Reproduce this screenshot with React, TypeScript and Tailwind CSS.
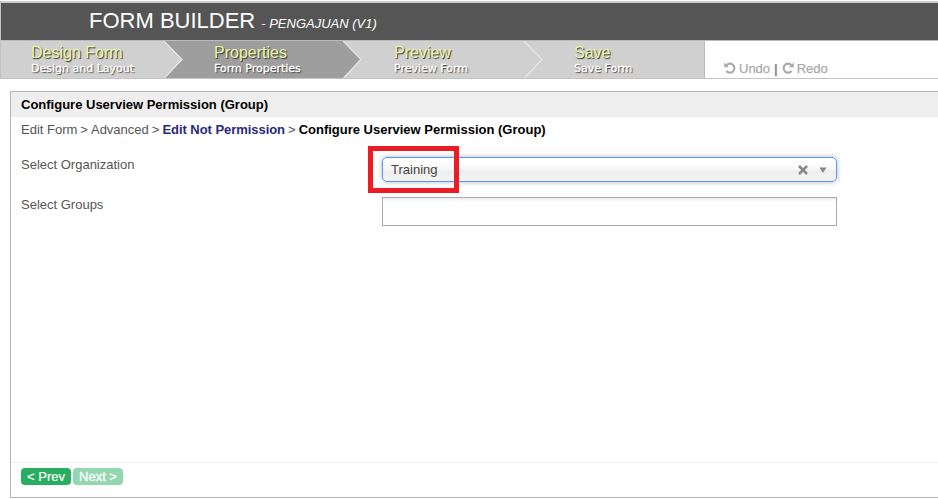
import React from "react";

type StepProps = {
  title: string;
  sub: string;
  box: string;
};

function Step({ title, sub, box }: StepProps) {
  return (
    <div className={`h-full shrink-0 pt-[3px] whitespace-nowrap ${box}`}>
      <div className="text-[16px] leading-[18px] text-[#e9f8aa] [text-shadow:1px_1px_1px_#333]">{title}</div>
      <div className="font-['DejaVu_Sans',sans-serif] text-[11px] leading-[14px] text-white [-webkit-text-stroke:0.3px_#fff] [text-shadow:1px_1px_1px_#333]">
        {sub}
      </div>
    </div>
  );
}

function Chevron({ left, right }: { left: string; right: string }) {
  return (
    <svg className="h-[37px] w-[20px] shrink-0" viewBox="0 0 20 37">
      <rect width="20" height="37" fill={right} />
      <path d="M0 0 L18.5 18.5 L0 37Z" fill={left} />
      <path d="M0 0 L18 18.5 L0.5 37" fill="none" stroke="#e8e8e8" strokeWidth="1.2" />
    </svg>
  );
}

function TurnArrow({ flip }: { flip?: boolean }) {
  return (
    <svg className={`h-[12px] w-[12px] ${flip ? "-scale-x-100" : ""}`} viewBox="0 0 12 12">
      <path d="M2.3 3.4 A4.5 4.5 0 1 1 2.4 9" fill="none" stroke="#aaaaaa" strokeWidth="2.1" />
      <path d="M0.2 0.4 V5.2 H5Z" fill="#aaaaaa" />
    </svg>
  );
}

function Separator() {
  return <span className="[word-spacing:-0.6px]"> &gt; </span>;
}

export default function App() {
  return (
    <div className="flex h-[499px] w-[938px] flex-col overflow-hidden bg-white font-['Liberation_Sans',Arial,sans-serif] text-[13px] text-[#555]">
      <div className="mt-px flex h-[78px] shrink-0 flex-col border-b border-l border-[#c4c4c4]">
        <header className="flex h-[40px] shrink-0 items-baseline border-t-2 border-b border-t-[#cccccc] border-b-[#bbbbbb] bg-[#555] pl-[88px] whitespace-nowrap text-white">
          <h1 className="text-[22px] leading-[36px]">FORM BUILDER</h1>
          <span className="ml-[6px] text-[13px] italic">- PENGAJUAN (V1)</span>
        </header>
        <nav className="flex h-[37px]">
          <Step title="Design Form" sub="Design and Layout" box="w-[163px] bg-[#d0d0d0] pl-[30px]" />
          <Chevron left="#d0d0d0" right="#9e9e9e" />
          <Step title="Properties" sub="Form Properties" box="w-[159px] bg-[#9e9e9e] pl-[30px]" />
          <Chevron left="#9e9e9e" right="#d0d0d0" />
          <Step title="Preview" sub="Preview Form" box="w-[161px] bg-[#d0d0d0] pl-[31px]" />
          <Chevron left="#d0d0d0" right="#d0d0d0" />
          <Step title="Save" sub="Save Form" box="w-[161px] border-r border-[#bbb] bg-[#d0d0d0] pl-[30px]" />
          <div className="flex h-full items-end pb-[2px] pl-[19px] leading-[15px] text-[#aaa] [-webkit-text-stroke:0.25px_#aaa]">
            <span className="mb-[2px]"><TurnArrow /></span>
            <span className="ml-[3px]">Undo</span>
            <span className="mx-[4px] font-bold text-[#888]">|</span>
            <span className="mb-[2px]"><TurnArrow flip /></span>
            <span className="ml-[3px]">Redo</span>
          </div>
        </nav>
      </div>

      <main className="mt-[12px] ml-[10px] flex h-[407px] shrink-0 flex-col border-y border-l border-[#b4b4b4]">
        <h2 className="h-[25px] bg-[#eee] pl-[10px] font-bold leading-[25px] text-black">
          Configure Userview Permission (Group)
        </h2>
        <div className="h-[37px] pl-[10px] leading-[25px] whitespace-nowrap">
          Edit Form<Separator />Advanced<Separator />
          <b className="tracking-[-0.05px] text-[#29297b]">Edit Not Permission</b><Separator />
          <b className="text-black">Configure Userview Permission (Group)</b>
        </div>
        <div className="flex h-[43px] pl-[10px]">
          <label className="w-[361px] pt-px leading-[20px]">Select Organization</label>
          <div className="relative mt-[3px] flex h-[25px] w-[455px] items-center rounded-[5px] border border-[#5897fb] bg-[linear-gradient(#fff_20%,#f6f6f6_50%,#eee_52%,#f4f4f4_100%)] pr-[9px] pl-[8px] text-[#444] shadow-[0_0_5px_rgba(0,0,0,0.3)]">
            <span className="grow">Training</span>
            <svg className="mr-[11px] h-[10px] w-[10px]" viewBox="0 0 10 10">
              <path d="M1 1 L9 9 M9 1 L1 9" stroke="#888" strokeWidth="2.5" />
            </svg>
            <svg className="h-[6px] w-[8px]" viewBox="0 0 8 6">
              <path d="M0.5 0.5H7.5L4 6Z" fill="#888" />
            </svg>
            <div className="absolute -top-[12px] -left-[15px] h-[47px] w-[91px] border-[5px] border-[#ed1c24]" />
          </div>
        </div>
        <div className="flex grow pl-[10px]">
          <label className="w-[361px] leading-[16px]">Select Groups</label>
          <div className="h-[29px] w-[455px] border border-[#aaa] bg-[linear-gradient(#eee_1%,#fff_15%)]" />
        </div>
        <footer className="flex h-[35px] items-start gap-[2px] border-t border-[#eee] pt-[5px] pl-[10px] leading-[17px] text-white">
          <button className="h-[17px] w-[50px] rounded-[4px] bg-[#27ae60] [-webkit-text-stroke:0.2px_#fff]">&lt; Prev</button>
          <button className="h-[17px] w-[50px] rounded-[4px] bg-[#93d7b0] [-webkit-text-stroke:0.3px_#fff]">Next &gt;</button>
        </footer>
      </main>
    </div>
  );
}
